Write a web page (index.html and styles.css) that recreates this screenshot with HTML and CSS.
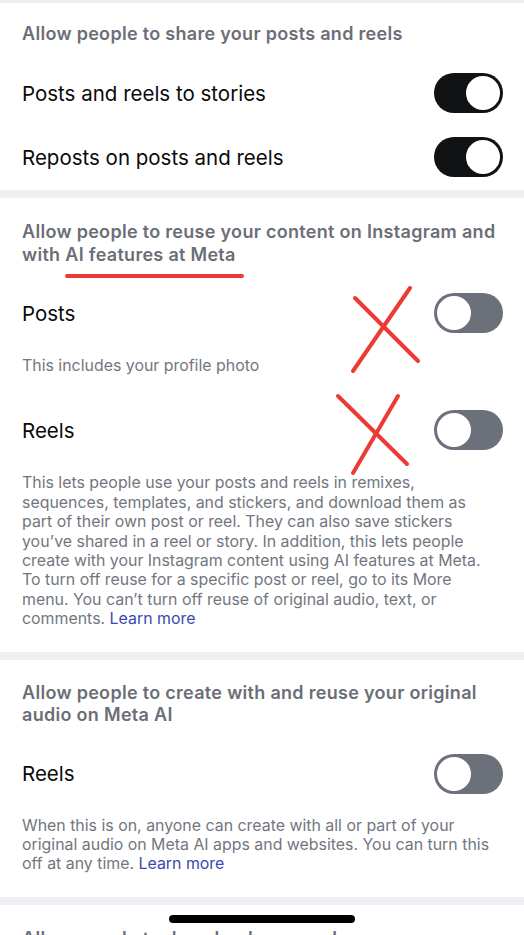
FILE: index.html
```html
<!DOCTYPE html>
<html lang="en">
<head>
  <meta charset="UTF-8" />
  <meta name="viewport" content="width=device-width, initial-scale=1.0"/>
  <title>Sharing and reuse</title>
  <link rel="stylesheet" href="styles.css">
</head>
<body>
  <div class="page">
    <div class="divider divider-top"></div>

    <section class="group group-share">
      <h3 class="group-title">Allow people to share your posts and reels</h3>
      <div class="row">
        <span class="row-label">Posts and reels to stories</span>
        <span class="switch on"><span class="knob"></span></span>
      </div>
      <div class="row">
        <span class="row-label">Reposts on posts and reels</span>
        <span class="switch on"><span class="knob"></span></span>
      </div>
    </section>

    <div class="divider"></div>

    <section class="group group-reuse">
      <h3 class="group-title">Allow people to reuse your content on Instagram and with AI features at Meta</h3>
      <div class="row row-first">
        <span class="row-label">Posts</span>
        <span class="switch"><span class="knob"></span></span>
      </div>
      <p class="hint">This includes your profile photo</p>
      <div class="row">
        <span class="row-label">Reels</span>
        <span class="switch"><span class="knob"></span></span>
      </div>
      <p class="hint">This lets people use your posts and reels in remixes, sequences, templates, and stickers, and download them as part of their own post or reel. They can also save stickers you’ve shared in a reel or story. In addition, this lets people create with your Instagram content using AI features at Meta. To turn off reuse for a specific post or reel, go to its More menu. You can’t turn off reuse of original audio, text, or comments. <a href="#" class="link">Learn more</a></p>

      <!-- hand-drawn marks on top of the section -->
      <svg class="marks" width="524" height="300" viewBox="0 0 524 300">
        <line x1="67" y1="78" x2="242" y2="78" />
        <line x1="355" y1="100" x2="418" y2="163" />
        <line x1="410" y1="90" x2="353" y2="173" />
        <line x1="338" y1="198" x2="407" y2="266" />
        <line x1="398" y1="198" x2="353" y2="275" />
      </svg>
    </section>

    <div class="divider"></div>

    <section class="group group-audio">
      <h3 class="group-title">Allow people to create with and reuse your original audio on Meta AI</h3>
      <div class="row row-first">
        <span class="row-label">Reels</span>
        <span class="switch"><span class="knob"></span></span>
      </div>
      <p class="hint">When this is on, anyone can create with all or part of your original audio on Meta AI apps and websites. You can turn this off at any time. <a href="#" class="link">Learn more</a></p>
    </section>

    <div class="divider"></div>

    <section class="group group-next">
      <h3 class="group-title">Allow people to download your reels</h3>
    </section>

    <div class="home-bar"></div>
  </div>
</body>
</html>
```

FILE: styles.css
```css
body {
  margin: 0;
  background-color: #fff;
  font-family: Inter, "Noto Sans", Arial, sans-serif;
  -webkit-font-smoothing: antialiased;
}
.page {
  position: relative;
  width: 524px;
  height: 935px;
  overflow: hidden;
}
.divider {
  height: 8px;
  background-color: #eff0f3;
}
.divider-top {
  height: 3px;
}
.group {
  position: relative;
  padding: 0 22px 23px;
}
.group-share {
  padding-top: 20px;
  padding-bottom: 1px;
}
.group-reuse {
  padding-top: 22px;
}
.group-audio {
  padding-top: 22px;
}
.group-next {
  padding-top: 22px;
}
.group-title {
  margin: 0 0 16px;
  font-size: 18px;
  line-height: 23px;
  font-weight: 600;
  color: #6b6e77;
  letter-spacing: 0.3px;
}
.group-share .group-title,
.group-audio .group-title {
  line-height: 22px;
}
.row {
  display: flex;
  align-items: center;
  justify-content: space-between;
  padding: 12px 0;
}
.row-first {
  margin-top: -1px;
}
.group-audio .row-first {
  margin-top: 1px;
}
.row-label {
  font-size: 20.5px;
  color: #0a0a0a;
}
.switch {
  position: relative;
  display: block;
  width: 69px;
  height: 40px;
  margin-right: -1px;
  border-radius: 20px;
  background-color: #6b707b;
}
.switch .knob {
  position: absolute;
  top: 1px;
  left: 1px;
  width: 34px;
  height: 34px;
  border: 2px solid #6b707b;
  border-radius: 50%;
  background-color: #fff;
}
.switch.on {
  background-color: #111214;
}
.switch.on .knob {
  left: auto;
  right: 1px;
  border-color: #111214;
}
.hint {
  margin: 10px 6px 0 0;
  font-size: 15.9px;
  line-height: 19.4px;
  color: #737680;
}
.row + .hint {
  margin-top: 11px;
}
.group-audio .row + .hint {
  margin-top: 10px;
}
.hint + .row {
  margin-top: 23px;
}
.link {
  color: #3a4aad;
  text-decoration: none;
}
.marks {
  position: absolute;
  left: 0;
  top: 0;
  pointer-events: none;
}
.marks line {
  stroke: #ec3a34;
  stroke-width: 4;
  stroke-linecap: round;
}
.home-bar {
  position: absolute;
  left: 169px;
  top: 915px;
  width: 186px;
  height: 8px;
  border-radius: 4px;
  background-color: #000;
}
```
